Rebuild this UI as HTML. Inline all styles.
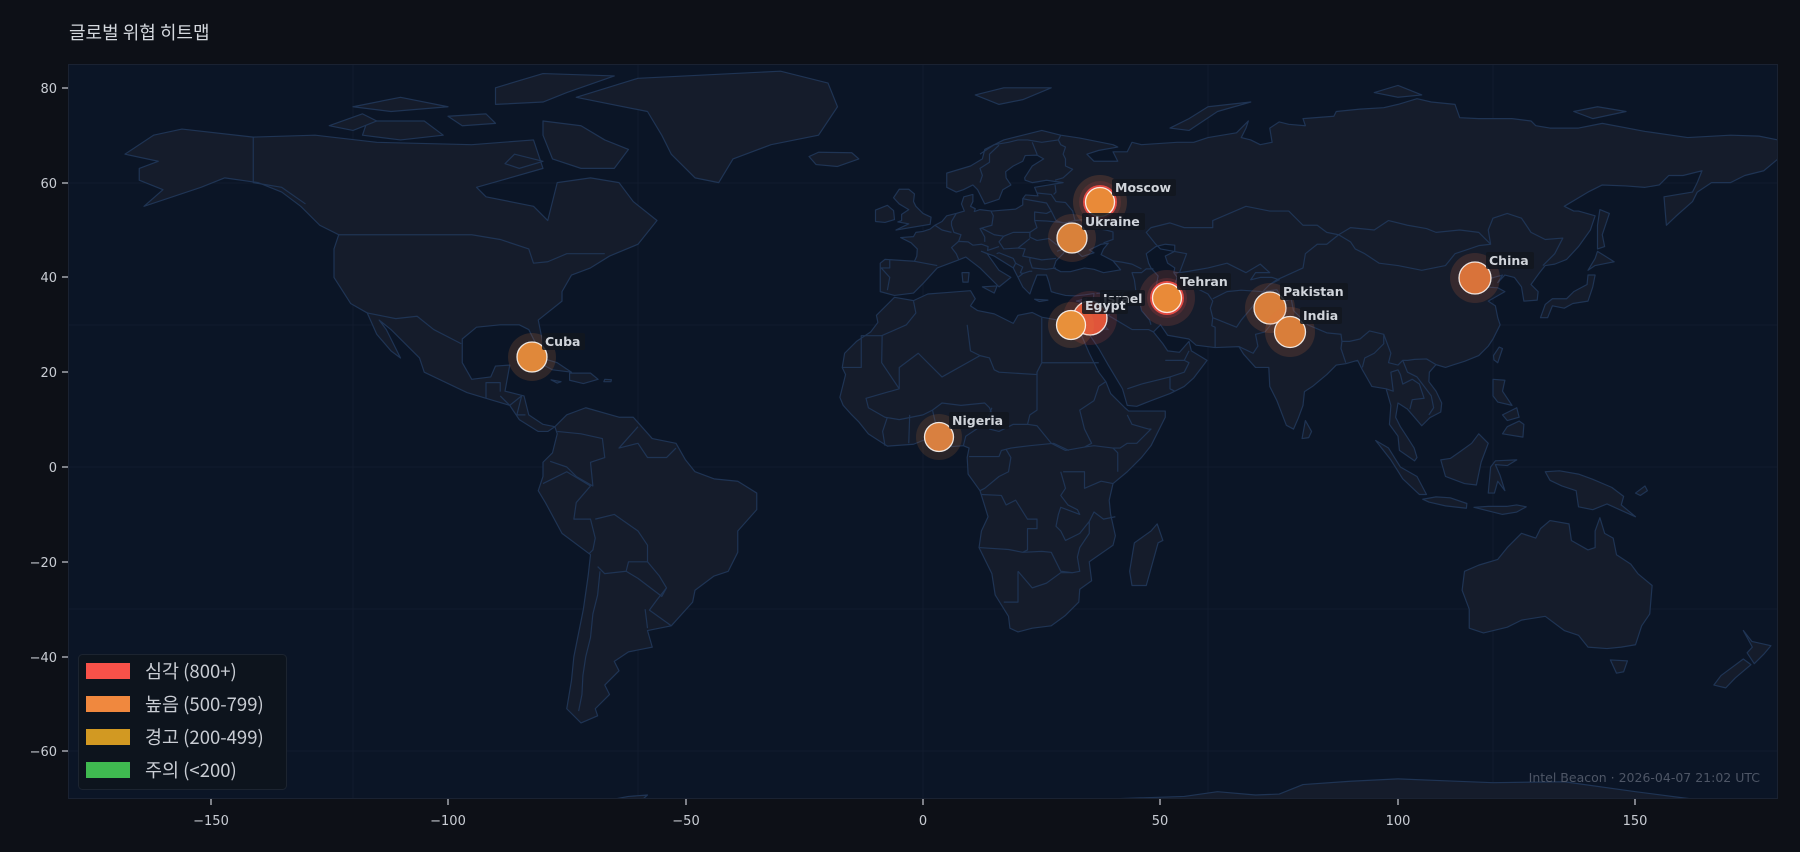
<!DOCTYPE html>
<html><head><meta charset="utf-8"><style>
html,body{margin:0;padding:0;background:#0d1017;}
body{width:1800px;height:852px;overflow:hidden;position:relative;font-family:"Liberation Sans","Noto Sans CJK KR",sans-serif;}
</style></head><body>
<svg width="1800" height="852" xmlns="http://www.w3.org/2000/svg" style="position:absolute;left:0;top:0">
<defs><clipPath id="pc"><rect x="68" y="64" width="1710" height="735"/></clipPath></defs>
<rect width="1800" height="852" fill="#0d1017"/>
<text x="69" y="39" fill="#d4d8de" font-size="18" font-family="'Noto Sans CJK KR',sans-serif">글로벌 위협 히트맵</text>
<rect x="68" y="64" width="1710" height="735" fill="#0b1526"/>
<g clip-path="url(#pc)">
<g stroke="#111c2e" stroke-width="1">
<line x1="353" y1="64" x2="353" y2="799"/><line x1="638" y1="64" x2="638" y2="799"/><line x1="923" y1="64" x2="923" y2="799"/><line x1="1208" y1="64" x2="1208" y2="799"/><line x1="1493" y1="64" x2="1493" y2="799"/>
<line x1="68" y1="183" x2="1778" y2="183"/><line x1="68" y1="325" x2="1778" y2="325"/><line x1="68" y1="467" x2="1778" y2="467"/><line x1="68" y1="609" x2="1778" y2="609"/><line x1="68" y1="751" x2="1778" y2="751"/>
</g>
<g transform="translate(923 467) scale(4.75 -4.74)" fill="#151c2b" stroke="#1f3454" stroke-width="1.2" stroke-linejoin="round">
<g vector-effect="non-scaling-stroke">
<polygon vector-effect="non-scaling-stroke" points="-168,66 -162,70 -156,71.3 -141,69.6 -128,70 -115,68.5 -95,68 -82,69 -80,63 -94,59 -92,57 -82,55 -79,52 -77,60 -70,61 -64,60 -61,56 -56,52 -60,47 -66,44.5 -70,42 -74,40.5 -76,37 -76,35 -81,31 -80,26 -81,25 -83,29 -85,30 -89,30 -94,29.5 -97,27 -97,22 -95,18.5 -91,19 -90,21.3 -87,21.5 -88,16 -84,15 -83,11 -80,9 -77.5,8.5 -79,7.5 -81,7.5 -85,10 -87,13 -92,14.5 -96,15.7 -105,20 -106,23 -112,29 -114.5,31 -113,29 -110,23 -112,24.5 -115,28 -117,32.5 -120.5,34.5 -124,40 -124,46 -123,49 -127,51 -131,55 -135,58 -140,60 -147,61 -152,59 -158,57 -164,55 -160,58.5 -165,60.5 -165,63 -161,64.5"/>
<polygon vector-effect="non-scaling-stroke" points="-73,78 -60,82 -30,83.5 -20,81 -18,76 -22,70 -32,68 -40,65 -43,60 -48,61 -53,66 -55,70 -58,75"/>
<polygon vector-effect="non-scaling-stroke" points="-80,73 -72,72 -67,69 -62,67 -65,63 -72,63 -78,65 -80,70"/>
<polygon vector-effect="non-scaling-stroke" points="-117,73 -105,73 -101,70 -110,69 -118,70"/>
<polygon vector-effect="non-scaling-stroke" points="-90,80 -80,83 -65,82.5 -75,79 -80,77 -90,76.5"/>
<polygon vector-effect="non-scaling-stroke" points="-120,76 -110,78 -100,76 -112,75"/>
<polygon vector-effect="non-scaling-stroke" points="-125,72 -118,74.5 -115,73 -120,71"/>
<polygon vector-effect="non-scaling-stroke" points="-100,74 -92,74.5 -90,72.5 -97,72"/>
<polygon vector-effect="non-scaling-stroke" points="-86,66 -80,64.5 -85,63 -88,64"/>
<polygon vector-effect="non-scaling-stroke" points="-85,21.8 -81,23.2 -77,22 -74,20 -78,20.5 -82,22.6"/>
<polygon vector-effect="non-scaling-stroke" points="-74.4,19.8 -70,19.8 -68.4,18.5 -71.5,17.6 -74.4,18.3"/>
<polygon vector-effect="non-scaling-stroke" points="-78.3,18.4 -76.2,18 -77,17.7"/>
<polygon vector-effect="non-scaling-stroke" points="-67,18.5 -65.6,18.4 -65.7,18 -67.2,18"/>
<polygon vector-effect="non-scaling-stroke" points="-77.5,8.5 -75,11 -71,12.5 -64,10.5 -61,10.5 -57,6 -52,5 -50,1.5 -48,-1 -44,-2.5 -39,-3 -35,-5.5 -35,-9 -39,-13.5 -39,-18 -41,-22 -44,-23 -48,-26 -48.5,-28.5 -53,-33.5 -58,-34.5 -57,-38 -62,-39 -65,-41 -64,-43 -67,-46 -66,-48 -69,-51 -68.5,-52.5 -72,-54 -75,-51 -74,-45 -73.5,-40 -71.5,-30 -70.5,-23 -70,-18.5 -76,-14 -79.5,-7.5 -81,-5 -80,-2 -80,1 -78,3 -77,7"/>
<polygon vector-effect="non-scaling-stroke" points="-9,43 -9,37 -6,36.2 -2,36.7 0,38.7 3,42 7,43.5 9,44.3 12,42 16,38 18.5,40 16,41.5 13.5,45 12.3,45.5 15,44.5 19,42 20,40 21,38 22.5,36.5 23,38 24,40.5 26,40.5 26.5,39 27,37 28,36.7 30,36.2 32,36.1 34,36.3 36,36.6 35.8,35 35,33 34.5,31.5 34.2,31.3 34.9,29.5 35,28 37,25 39,21.5 42,16.5 43,13 45,12.8 48,14 52,15.5 55,17 57,18.8 59.8,22.5 56.5,24.5 56,26.5 54,24.2 51.5,24.5 50.5,26 48.5,28.5 50,30 51.5,27.8 56,27 57.5,25.7 61.5,25.2 66.5,25.4 67.5,23.8 70,21 72.8,21 73,17 74.5,14 76.5,8.8 78,8 79,10.3 80,13 80.3,15.9 82,17 85,19.5 87,21.5 89,21.8 91.5,22.5 92.5,20.5 94.5,17 97.5,16.5 98.5,13 98.2,9 100,6.5 100.3,3.5 103.5,1.3 104,2 103.4,4 102,6.2 100.5,8.5 99.5,10.5 100,13.5 102,12.2 105,8.7 106.7,10.4 109,11.6 109.2,13.5 108,16 106.5,18 106.6,20 108,21.6 110,21 111.5,21.5 114,22.3 117,23.5 119,25.5 120,27 121.5,30 121,31.5 120.5,34 119,35 122.5,37 121,37.8 118,38 117.5,38.8 119.5,39.8 122,40.5 121,38.9 122.5,40.5 124.5,40 126,38 126.5,35 129.3,35.2 129.5,37 128,38.5 129.8,41 131,42.5 133,42.8 135.5,43.8 138,46.5 140.5,50 141.5,53 138,54 137,54 135,55 140,58 143,59.5 148,59.3 152,59 155,59.5 157,61.5 160,61.5 164,62.5 163,60 162,58 156,57 156.5,51 158.5,52.9 162,56 163,58 166,60 170,60 173,61.5 177,62.5 180,65 180,69 176,69.8 170,70 161,69.5 152,70.8 143,72.5 138,71.5 132,71.5 129,72 128,73 124,73.5 117,73.5 113,73.7 112,76.5 107,77 104,77.7 100,76.5 97,75.8 92,75.5 87,75 86.5,74 80,73.5 80.5,72 77,72.3 75,72.8 73,71.5 73.5,68.5 71,68 69,69 67,69.5 68,71.5 68.5,73 66,70.5 60,69.5 57,68.5 53.5,68.5 46,68 44,68.5 43,66.5 40,66.5 41,64.5 36,64.5 34.5,66 37,66.8 41,67.5 40,68 33,69.4 29,70 25,71 21,70 17,69 13,67 12.5,65 10,63.5 5,62 5,59 7,58 8.5,58.5 10.5,59.5 11.5,58.5 12.5,56.5 13,55.5 14.5,56 16,56.5 16.8,58.5 18.5,59.5 17.5,61 17.4,62.3 19,63.5 21,64.5 21.5,65.7 24,65.8 25.4,65 23,63.5 21.4,61 21.5,60.5 23,60 26,60.5 29.5,60 26.5,59.5 23.5,59 24,57.8 24.2,57.2 21.6,57.4 21,56.6 21,55.3 19.5,54.4 14.5,54 12,54.3 10.8,53.9 11,54.5 10,55 10.5,56 10.5,57.5 8.6,57 8.1,55.5 8.7,54 7,53.5 5,53 4,51.8 2.5,51 1.5,50.2 0,49.7 -1.5,49.5 -2,48.6 -4.7,48.4 -2.5,47.3 -1.2,46 -1.3,44.5 -1.8,43.4 -8,43.8"/>
<polygon vector-effect="non-scaling-stroke" fill="#0b1526" points="27.5,42 28,43.5 29.5,45 30.5,46.5 32,46.5 33.5,46 32.5,45.3 33.5,44.4 36,45.2 35,45.8 37.5,47 39,47.2 38,46 37.5,44.8 40,43.5 41.6,41.6 38,41 36,41.7 34,42 31,41.2 29,41.2"/>
<polygon vector-effect="non-scaling-stroke" fill="#0b1526" points="47,45 49,46.5 51,47 53,46.8 53,45.5 51,44.5 51.5,43 53,42 52.8,41 53.5,40 53,38.5 54,37.4 51,36.8 49,37.8 49.5,40.3 48,42 47.5,43"/>
<polygon vector-effect="non-scaling-stroke" points="-17,21 -16.5,24 -14,26.5 -11,28.5 -9.5,30.5 -9.8,32 -6,35.8 -2,35.1 1,36.5 5,36.8 10,37.2 11,35.5 10,34 11.5,33 15,32.3 19,30.3 20,32 23,32.6 25,31.6 29,30.9 32,31.2 34.2,31.3 34.9,29.5 33,28 32.5,29.8 35,24 37,20 38.5,18 39.5,15.5 42.5,12.5 43.3,11.8 51,11.8 51,10.5 48,4.5 46,2 43,-1 40,-3.5 39.2,-7 39.5,-10 40.5,-14.5 40,-16.5 35,-20 35.5,-24 33,-25.8 32.8,-28.5 30,-31.3 27,-33.5 23,-34 20,-34.8 18.3,-34 18,-31.5 15.2,-27 14.5,-22.5 11.8,-17 12.3,-13.5 13.7,-10.5 12,-5 9.5,-1.5 9.3,2 9.7,4 8.5,4.5 6,4.3 4.5,6.3 1,6 -2,4.8 -7.5,4.4 -11.5,7 -13.5,9.5 -15,11 -16.8,13 -17.5,14.7 -16.3,19.5"/>
<polygon vector-effect="non-scaling-stroke" points="44,-25 47,-25 49.5,-16 50.5,-15.5 49.3,-12 48,-13.5 44.5,-16 43.5,-22"/>
<polygon vector-effect="non-scaling-stroke" points="114,-22 113.5,-26 115,-30 115,-34 118,-35 123,-33.8 126,-32.3 131,-31.5 135,-34.5 138,-35.5 140,-38 144,-38.3 147,-38 150,-37.5 151.3,-33.5 153,-31 153.5,-25 150.5,-22.5 149,-20.5 146,-18.5 145.3,-15 143.5,-14 142.5,-10.7 141.5,-13.5 141.5,-17 140,-17.5 136.5,-15.5 136,-12 132,-11.3 130,-13 129,-15 126,-14 123,-17 121,-19.5 117,-20.7"/>
<polygon vector-effect="non-scaling-stroke" points="144.7,-40.7 148.3,-40.9 147.5,-43.2 146,-43.5"/>
<polygon vector-effect="non-scaling-stroke" points="172.7,-34.5 174.5,-36.8 178.5,-37.7 177,-39.5 175,-41.5 173.5,-39.2 174.6,-38"/>
<polygon vector-effect="non-scaling-stroke" points="172.7,-40.5 174.3,-41.7 171,-44.5 169,-46.6 166.5,-46 168,-44"/>
<polygon vector-effect="non-scaling-stroke" points="130,31.5 131.5,31.5 132.5,34 135,33.5 136.8,34.5 140,35 141,38 141.5,40.5 140,40.5 139.8,38.5 137,37 135.5,35.5 132.5,35.5 131,34.3"/>
<polygon vector-effect="non-scaling-stroke" points="140,41.5 141.5,42.5 144,43 145.5,43.3 142,45.5 141.5,44"/>
<polygon vector-effect="non-scaling-stroke" points="142,46 143.5,46.5 143,49 144.5,53.5 142.5,54.3 142,51"/>
<polygon vector-effect="non-scaling-stroke" points="120.2,22.6 121,22 122,25 121.3,25.3 120.1,23.5"/>
<polygon vector-effect="non-scaling-stroke" points="120,18.5 122.5,18.3 122,16 124,13 121,13.7 120,15"/>
<polygon vector-effect="non-scaling-stroke" points="122,7 126.3,6.3 126.5,9 125.5,9.7 123,8.5"/>
<polygon vector-effect="non-scaling-stroke" points="122,11 125,12.5 125.5,10.5 123,9.8"/>
<polygon vector-effect="non-scaling-stroke" points="109,1.5 110,-2 114,-3.5 116.5,-3.8 117.5,1 119,5 117,7 115.5,5 113,3.2 111,1.8"/>
<polygon vector-effect="non-scaling-stroke" points="95.3,5.6 98,4 100.5,0 104,-2 106,-5.8 104.5,-5.8 101,-2.5 98.5,1.5"/>
<polygon vector-effect="non-scaling-stroke" points="105.2,-6.8 108,-6.3 111,-6.5 114.5,-7.7 114.4,-8.7 110,-8.2 106.5,-7.4"/>
<polygon vector-effect="non-scaling-stroke" points="116,-8.5 119,-8.3 123,-8.3 125,-8 127,-8.4 125,-9.5 122,-10 118,-9"/>
<polygon vector-effect="non-scaling-stroke" points="119,-5.5 119.5,0 120.5,1.3 125,1.5 123,0.3 120.5,0.5 121.5,-1.8 122.5,-5 121,-3 120.3,-5.5"/>
<polygon vector-effect="non-scaling-stroke" points="131,-1 134,-0.8 138,-1.5 141,-2.6 145,-4.3 147.5,-6.2 147,-8 150,-10.5 144,-7.8 141,-9 138,-8.4 137.5,-5 134.5,-4 132,-2.8"/>
<polygon vector-effect="non-scaling-stroke" points="150,-5.5 152,-4 152.5,-5 151,-6"/>
<polygon vector-effect="non-scaling-stroke" points="79.8,6 80.5,9.8 81.8,7.5 81.2,6.2"/>
<polygon vector-effect="non-scaling-stroke" points="-5.7,50 1.5,51.2 1.7,52.7 0,53.5 -1.5,55 -2,56 -1.8,57.6 -3,58.6 -5,58.6 -6.2,56.8 -5,55.5 -3,54.3 -4.5,53.3 -4.5,52 -5.3,51.7 -3,51.3"/>
<polygon vector-effect="non-scaling-stroke" points="-6,52.2 -6.2,54.1 -7.5,55.2 -10,54.2 -10,51.8 -8,51.6"/>
<polygon vector-effect="non-scaling-stroke" points="-24,65.5 -22,66.4 -15,66.3 -13.5,65 -18,63.4 -22.5,63.8"/>
<polygon vector-effect="non-scaling-stroke" points="11,78.5 17,80 27,80 21,77.5 16,76.5"/>
<polygon vector-effect="non-scaling-stroke" points="52,71.5 56,73.5 60,76 69,77 62,75 56,71"/>
<polygon vector-effect="non-scaling-stroke" points="95,79 100,80.5 105,78.5 100,78"/>
<polygon vector-effect="non-scaling-stroke" points="137,75 142,76 148,75 141,73.5"/>
<polygon vector-effect="non-scaling-stroke" points="12.5,38 15.6,38.2 15,36.7"/>
<polygon vector-effect="non-scaling-stroke" points="8.2,41 9.7,41 9.5,39 8.4,39"/>
<polygon vector-effect="non-scaling-stroke" points="32.3,35 34.5,35.6 34,34.6"/>
<polygon vector-effect="non-scaling-stroke" points="23.5,35.4 26.3,35.2 24.5,34.9"/>
<polygon vector-effect="non-scaling-stroke" points="-180,-71 -150,-72 -100,-72.5 -70,-71 -62,-69.5 -58,-69.2 -60,-71 -40,-76 -20,-72 0,-70.5 20,-70.2 40,-70 55,-69.5 62,-68.5 70,-69.2 75,-69 80,-67 90,-66.3 100,-65.8 110,-66.2 120,-66.6 135,-66.4 150,-68.5 160,-69.8 170,-71 180,-72 180,-90 -180,-90"/>
<g fill="none">
<polyline vector-effect="non-scaling-stroke" points="-141,69.6 -141,60 -135,59 -130,55.5"/>
<polyline vector-effect="non-scaling-stroke" points="-123,49 -95,49 -89,48 -83,46 -82,43 -79,43.3 -75,45 -71,45 -67,45"/>
<polyline vector-effect="non-scaling-stroke" points="-117,32.5 -111,31.3 -106.5,31.8 -103,29 -97.2,26"/>
<polyline vector-effect="non-scaling-stroke" points="-92,14.5 -92,17.8 -91,17.8 -89,17.8 -89,15.9"/>
<polyline vector-effect="non-scaling-stroke" points="-89,15 -87,13 -84.5,15 -85.5,11 -83.7,11"/>
<polyline vector-effect="non-scaling-stroke" points="-77,7.5 -72,7 -67.5,6 -67,2 -70,1 -69.5,-4 -73,-2 -75,0 -78.5,1.2"/>
<polyline vector-effect="non-scaling-stroke" points="-60,8.5 -64,4 -60,5 -58,2 -54,2 -52,4"/>
<polyline vector-effect="non-scaling-stroke" points="-80,-3.5 -75,-1 -70,-4 -73,-7.5 -73.5,-11 -70,-11 -69,-15 -69.5,-17.5 -70.3,-18.3"/>
<polyline vector-effect="non-scaling-stroke" points="-69,-11 -65,-10 -60,-13.5 -58,-16.5 -58,-20 -62,-20 -62.5,-22 -67,-22.5 -68.5,-21"/>
<polyline vector-effect="non-scaling-stroke" points="-68,-22 -68.5,-27 -69.5,-31 -70,-36 -71,-40 -71.6,-44 -71.8,-48 -72.5,-51.5"/>
<polyline vector-effect="non-scaling-stroke" points="-62.5,-22 -60,-23.5 -55,-27.3 -54,-25.5 -55.5,-23 -58,-20"/>
<polyline vector-effect="non-scaling-stroke" points="-54,-25.5 -56,-28 -57.6,-30.2 -53,-33.5"/>
<polyline vector-effect="non-scaling-stroke" points="-58.5,-30 -58,-34"/>
<polyline vector-effect="non-scaling-stroke" points="-8.6,27.7 -8.7,22 -5,16.5 -5,21 -1,24 4,19 12,23.5 14,23 15,20.5 16,20 24,19.5 24,20 25,22 25,31.5"/>
<polyline vector-effect="non-scaling-stroke" points="-17,21 -13,21 -13,27.7 -8.7,27.7 -3.5,30 -1.5,32.5 -2,35"/>
<polyline vector-effect="non-scaling-stroke" points="9.3,30 10,24.5 12,23.5"/>
<polyline vector-effect="non-scaling-stroke" points="25,22 37,22"/>
<polyline vector-effect="non-scaling-stroke" points="24,20 24,12 22.5,11 22,9 24,8.7 27,5 30,3.5 34,4.2 35.5,5 34,8 33,12 36,14"/>
<polyline vector-effect="non-scaling-stroke" points="-5,16.5 -12,14.5 -11.5,12.5 -8,10.5 -5,10 0,11 2,12 4,13.5 8,13 13,13.5 14,12.5 15,10 14,8 16,7.5 19,9 22,9"/>
<polyline vector-effect="non-scaling-stroke" points="2,12 2.7,9 2.7,6.3"/>
<polyline vector-effect="non-scaling-stroke" points="-3,5 -2.8,11"/>
<polyline vector-effect="non-scaling-stroke" points="-8,4.5 -8.5,7.5 -7.5,10.5"/>
<polyline vector-effect="non-scaling-stroke" points="8.5,4.5 9,6.5 12,8.5 13.5,10 14.5,12.5"/>
<polyline vector-effect="non-scaling-stroke" points="9.7,2.2 11.5,2.2 16,2.2 16.5,3.5 18.5,4 22.5,4.5 27.5,5 29,4.3 30.7,3.5"/>
<polyline vector-effect="non-scaling-stroke" points="12,-5 13,-4.5 16,-2 18,-1 18.5,2 17.5,3.7"/>
<polyline vector-effect="non-scaling-stroke" points="12.3,-5.8 16.5,-6 17.5,-8 19.5,-7 22,-11 24,-11 24,-13 22,-13 22,-17.5 21,-18 18,-17.4 11.8,-17"/>
<polyline vector-effect="non-scaling-stroke" points="29,-1 30,-4.5 29,-6 30.5,-8 32.5,-9 33,-10 29,-8.5 28.5,-10 28,-12.5 29,-13.5 30,-15.5 33,-14 35,-11.5 35,-14 33,-17 32.5,-19 33,-22 31.5,-22.3 29,-22 27,-18 25,-17.8 21,-18"/>
<polyline vector-effect="non-scaling-stroke" points="40.5,-10.5 38,-11 36,-9.5 35,-11.5"/>
<polyline vector-effect="non-scaling-stroke" points="29.5,-1 31,-1 34,-1 34,-4.5 37.5,-3 40,-3.5"/>
<polyline vector-effect="non-scaling-stroke" points="34,4.2 36,4.5 40,4 41.5,4 43,5 45,5 48,8 47.5,8 44,9 43,11"/>
<polyline vector-effect="non-scaling-stroke" points="41,-1 41,3 40,4"/>
<polyline vector-effect="non-scaling-stroke" points="36,14 37,17 38.5,18"/>
<polyline vector-effect="non-scaling-stroke" points="20,-22 20,-25 20,-28.5 17,-28.5"/>
<polyline vector-effect="non-scaling-stroke" points="20,-22 23,-25.5 26,-24.5 29,-22.3 31.5,-22.3"/>
<polyline vector-effect="non-scaling-stroke" points="34.9,29.5 35.5,32.5 36,33.5 38.8,33.4 41,34.4 42.3,37.2 44.8,37.2"/>
<polyline vector-effect="non-scaling-stroke" points="36.5,36.6 38,36.8 42,37.1 44.8,37.2 44.5,39.5 44,41 46,41 47,41.8 48.5,41.8"/>
<polyline vector-effect="non-scaling-stroke" points="41,34.4 39,32 37,31.5 38,30 39,29 36.5,29.3 35,28"/>
<polyline vector-effect="non-scaling-stroke" points="39,32 44,29 47.5,29 48.5,28.5"/>
<polyline vector-effect="non-scaling-stroke" points="44.8,37.2 45.5,35.5 46,33 47.7,31 48,30"/>
<polyline vector-effect="non-scaling-stroke" points="43,16.5 46,17.5 52,19 52,16.5 53,16"/>
<polyline vector-effect="non-scaling-stroke" points="55,22.5 56,24.5"/>
<polyline vector-effect="non-scaling-stroke" points="51,22.5 55,22.5 56,22 55,20 52,19"/>
<polyline vector-effect="non-scaling-stroke" points="61.5,25.2 61.5,29.5 60.8,29.8 61,31.5 60.5,33.5 61,35 60,36.5 57,38 53.5,37.3"/>
<polyline vector-effect="non-scaling-stroke" points="61,31.5 66,29.5 67,31 69.5,34 71,35.5 71.5,37 74.5,37.4 75,36.5"/>
<polyline vector-effect="non-scaling-stroke" points="61,35.5 64,37 67,37.3 68.5,37.2 71.5,37 73,38.5 75,39.5 73.5,40 71,40 69,39.5 70,41 73,41 71,42.8 68,41 66,42 64,43 60,42 56,41.3 54,41 52.8,41"/>
<polyline vector-effect="non-scaling-stroke" points="66.5,25.4 69.5,24 70.5,25.5 70,28 72,28.5 74,31 75.2,32.5 75,34.5 77.5,35.5 78,33 79,32 81,30 85,28.3 88,28 88.2,26.5 89.8,26.5 92,27 94,28.7 97,28 97,26 95,24 93,23 92.5,21"/>
<polyline vector-effect="non-scaling-stroke" points="88.2,26.5 88,25 89,22"/>
<polyline vector-effect="non-scaling-stroke" points="97,28 98.5,24 98,22 100,21.5 101,22.5 102,22.5 103.5,22.7 106,22.8 108,21.6"/>
<polyline vector-effect="non-scaling-stroke" points="97.5,16.5 99,16 98.5,20 100,20.5 100.5,19.5 101,17.5 102,18 103,18.5 104.5,17.5 105,16 105.5,14.5 103,14.2 102.5,12.2"/>
<polyline vector-effect="non-scaling-stroke" points="101,22.5 102,20 104,19 105.5,17 107,15 107.5,12.5 106.5,11"/>
<polyline vector-effect="non-scaling-stroke" points="73,38.5 74.5,39.5 80,42 80.5,45 83,47 85,47 87.5,49 90,47.5 91,46 93,45 96,43 100,42.5 105,41.5 110,42.5 112,45 115,46 117,46.7 119.5,47 119,50 120,52.5 123,53.5 126,52.5 128,49.5 131,48 134.7,48.3 133,45 131,43 130.5,42.5"/>
<polyline vector-effect="non-scaling-stroke" points="87.5,49 90,50.5 95,50 98,52 102,51 106,50.3 108,49.5 113,50 117,49.5 119.5,47"/>
<polyline vector-effect="non-scaling-stroke" points="54,41 55.5,45 50,46 49,47 47,49.5 48,50.5 52,51.5 55,50.5 61,50.5 61,52 68,55 73,54 77,54 80,51 83,51 85,49.5 87.5,49"/>
<polyline vector-effect="non-scaling-stroke" points="24,57.8 27,57.5 28,56 30,55.8 31.5,54 32,52 35,52.3 36,50.4 38.5,50 40,49.6 40,48 38,47.3"/>
<polyline vector-effect="non-scaling-stroke" points="21,56.6 22.5,56.3 26,55.7 27,54 26,53.5 23.5,53.8 23.5,52 24,50.5 22.5,49.5"/>
<polyline vector-effect="non-scaling-stroke" points="23.5,52 26,51.9 30,51.5 32,52"/>
<polyline vector-effect="non-scaling-stroke" points="22.5,49.5 22.5,48.5 24,47.8 26.5,48.2 28,47 29.5,46 28.2,45.5"/>
<polyline vector-effect="non-scaling-stroke" points="22.5,49.5 19,49.5 17,48.7 15,49 12.5,50.3 12,50.3 14.5,51 14.8,53 14.3,54"/>
<polyline vector-effect="non-scaling-stroke" points="17,48.7 16,47.5 17,46 20,46.2 22.5,48.2"/>
<polyline vector-effect="non-scaling-stroke" points="20,46.2 21.5,46 21,44.5 22.5,44.2 22.5,43.5 23,42 26,41.7 28,42"/>
<polyline vector-effect="non-scaling-stroke" points="22.5,44.2 25,43.7 28,44"/>
<polyline vector-effect="non-scaling-stroke" points="16,46.5 13.6,45.7 13.7,46.5 12.3,47 10.5,46.8 9.5,47.5 7.5,47.6 6,46.3 7,45 7.5,43.8"/>
<polyline vector-effect="non-scaling-stroke" points="13,47.5 13,48.5 12,50.3"/>
<polyline vector-effect="non-scaling-stroke" points="7.5,47.6 8,49 6.5,49.5 6,51 6,51.8 7,53.5"/>
<polyline vector-effect="non-scaling-stroke" points="6,49.5 4,50 2.5,51"/>
<polyline vector-effect="non-scaling-stroke" points="3,42.5 -1.8,43.4"/>
<polyline vector-effect="non-scaling-stroke" points="-7,43.7 -7,42 -8.8,42 -7,40 -7.5,37.3"/>
<polyline vector-effect="non-scaling-stroke" points="12,66 15,68 18,68.5 20,69 22,69 25,68.5 28.5,69 29,70"/>
<polyline vector-effect="non-scaling-stroke" points="12,60 12.5,61.5 12,63 14,64.3 14,66 16,67.9"/>
<polyline vector-effect="non-scaling-stroke" points="23,68.5 24,66 24,65.8"/>
<polyline vector-effect="non-scaling-stroke" points="28.5,69 29,68 30,67.5 29.5,66 30,65 30,63.5 31.5,62.8 29.5,61 27.8,60.5"/>
<polyline vector-effect="non-scaling-stroke" points="27.8,59.5 28,58 27.5,57.5"/>
<polyline vector-effect="non-scaling-stroke" points="27,54 28,52 29.5,51.5"/>
<polyline vector-effect="non-scaling-stroke" points="19,42 19.5,43 19,44 16,45.2 15.5,45"/>
<polyline vector-effect="non-scaling-stroke" points="19.5,43 21,42.2 20.5,41 21,40.8 22.5,41.3 23,41.3"/>
<polyline vector-effect="non-scaling-stroke" points="20,40 21,40.8"/>
<polyline vector-effect="non-scaling-stroke" points="40,43.5 42,43.2 44,42.8 46,41.8"/>
</g>
</g>
</g>
<g stroke="#fff" stroke-opacity="0.85" stroke-width="1.3">
<circle cx="1100" cy="202" r="27" fill="rgba(230,120,60,0.18)" stroke="none"/>
<circle cx="1100" cy="202" r="21" fill="rgba(224,72,72,0.15)" stroke="none"/>
<circle cx="1100" cy="202" r="17" fill="#e24a42" stroke="none"/>
<circle cx="1100" cy="202" r="14.5" fill="#e98a38"/>
<circle cx="1072" cy="238" r="24" fill="rgba(230,120,60,0.16)" stroke="none"/>
<circle cx="1072" cy="238" r="15" fill="#d9813a"/>
<circle cx="1167" cy="298" r="28" fill="rgba(230,100,70,0.16)" stroke="none"/>
<circle cx="1167" cy="298" r="20" fill="rgba(224,72,72,0.18)" stroke="none"/>
<circle cx="1167" cy="298" r="17" fill="#e24a42" stroke="none"/>
<circle cx="1167" cy="298" r="14.5" fill="#e98a38"/>
<circle cx="1090" cy="318" r="27" fill="rgba(224,80,70,0.16)" stroke="none"/>
<circle cx="1090" cy="318" r="17" fill="#e0553a"/>
<circle cx="1071" cy="325" r="23" fill="rgba(230,130,60,0.16)" stroke="none"/>
<circle cx="1071" cy="325" r="14.5" fill="#e8903a"/>
<circle cx="1270" cy="308" r="25" fill="rgba(230,120,60,0.16)" stroke="none"/>
<circle cx="1270" cy="308" r="16" fill="#d97e3a"/>
<circle cx="1290" cy="332" r="25" fill="rgba(230,120,60,0.16)" stroke="none"/>
<circle cx="1290" cy="332" r="15.5" fill="#d97e3a"/>
<circle cx="1475" cy="278" r="25" fill="rgba(230,110,60,0.16)" stroke="none"/>
<circle cx="1475" cy="278" r="16" fill="#d9733a"/>
<circle cx="532" cy="357" r="24" fill="rgba(230,130,60,0.16)" stroke="none"/>
<circle cx="532" cy="357" r="15" fill="#e0883a"/>
<circle cx="939" cy="437" r="23" fill="rgba(230,130,60,0.14)" stroke="none"/>
<circle cx="939" cy="437" r="14.5" fill="#d98040"/>
</g>
<g font-family="'DejaVu Sans',sans-serif" font-weight="bold" font-size="12.5" fill="#d0d4da">
<rect x="1112" y="179" width="64" height="17" rx="2" fill="rgba(18,22,30,0.85)"/><text x="1115" y="192">Moscow</text>
<rect x="1082" y="213" width="63" height="17" rx="2" fill="rgba(18,22,30,0.85)"/><text x="1085" y="226">Ukraine</text>
<rect x="1100" y="290" width="45" height="16" rx="2" fill="rgba(18,22,30,0.85)"/><text x="1103" y="303">Israel</text>
<rect x="1082" y="297" width="46" height="17" rx="2" fill="rgba(18,22,30,0.85)"/><text x="1085" y="310">Egypt</text>
<rect x="1177" y="273" width="54" height="17" rx="2" fill="rgba(18,22,30,0.85)"/><text x="1180" y="286">Tehran</text>
<rect x="1280" y="283" width="68" height="17" rx="2" fill="rgba(18,22,30,0.85)"/><text x="1283" y="296">Pakistan</text>
<rect x="1300" y="307" width="42" height="17" rx="2" fill="rgba(18,22,30,0.85)"/><text x="1303" y="320">India</text>
<rect x="1486" y="252" width="48" height="17" rx="2" fill="rgba(18,22,30,0.85)"/><text x="1489" y="265">China</text>
<rect x="542" y="333" width="43" height="17" rx="2" fill="rgba(18,22,30,0.85)"/><text x="545" y="346">Cuba</text>
<rect x="949" y="412" width="60" height="17" rx="2" fill="rgba(18,22,30,0.85)"/><text x="952" y="425">Nigeria</text>
</g>
<text x="1760" y="782" text-anchor="end" font-family="'DejaVu Sans',sans-serif" font-size="12.5" fill="#4e5666">Intel Beacon · 2026-04-07 21:02 UTC</text>
</g>
<rect x="68.5" y="64.5" width="1709" height="734" fill="none" stroke="#1a2232" stroke-width="1"/>
<rect x="78.5" y="654.5" width="208" height="135" rx="4" fill="#0e141c" fill-opacity="0.95" stroke="#1c2430"/>
<rect x="86" y="663" width="44" height="16" fill="#f85149"/>
<rect x="86" y="696" width="44" height="16" fill="#f0883e"/>
<rect x="86" y="729" width="44" height="16" fill="#d29922"/>
<rect x="86" y="762" width="44" height="16" fill="#3fb950"/>
<g font-family="'Noto Sans CJK KR',sans-serif" font-size="18.5" fill="#c9cdd4">
<text x="145" y="678">심각 (800+)</text>
<text x="145" y="711">높음 (500-799)</text>
<text x="145" y="744">경고 (200-499)</text>
<text x="145" y="777">주의 (&lt;200)</text>
</g>
<g stroke="#c9cdd4" stroke-width="1.2">
<line x1="211" y1="799" x2="211" y2="805"/><line x1="448" y1="799" x2="448" y2="805"/><line x1="686" y1="799" x2="686" y2="805"/><line x1="923" y1="799" x2="923" y2="805"/><line x1="1160" y1="799" x2="1160" y2="805"/><line x1="1398" y1="799" x2="1398" y2="805"/><line x1="1635" y1="799" x2="1635" y2="805"/>
<line x1="62" y1="88" x2="68" y2="88"/><line x1="62" y1="183" x2="68" y2="183"/><line x1="62" y1="277" x2="68" y2="277"/><line x1="62" y1="372" x2="68" y2="372"/><line x1="62" y1="467" x2="68" y2="467"/><line x1="62" y1="562" x2="68" y2="562"/><line x1="62" y1="657" x2="68" y2="657"/><line x1="62" y1="751" x2="68" y2="751"/>
</g>
<g font-family="'DejaVu Sans',sans-serif" font-size="13" fill="#c9cdd4">
<g text-anchor="middle">
<text x="211" y="825">−150</text><text x="448" y="825">−100</text><text x="686" y="825">−50</text><text x="923" y="825">0</text><text x="1160" y="825">50</text><text x="1398" y="825">100</text><text x="1635" y="825">150</text>
</g>
<g text-anchor="end">
<text x="57" y="93">80</text><text x="57" y="188">60</text><text x="57" y="282">40</text><text x="57" y="377">20</text><text x="57" y="472">0</text><text x="57" y="567">−20</text><text x="57" y="662">−40</text><text x="57" y="756">−60</text>
</g>
</g>
</svg>
</body></html>
